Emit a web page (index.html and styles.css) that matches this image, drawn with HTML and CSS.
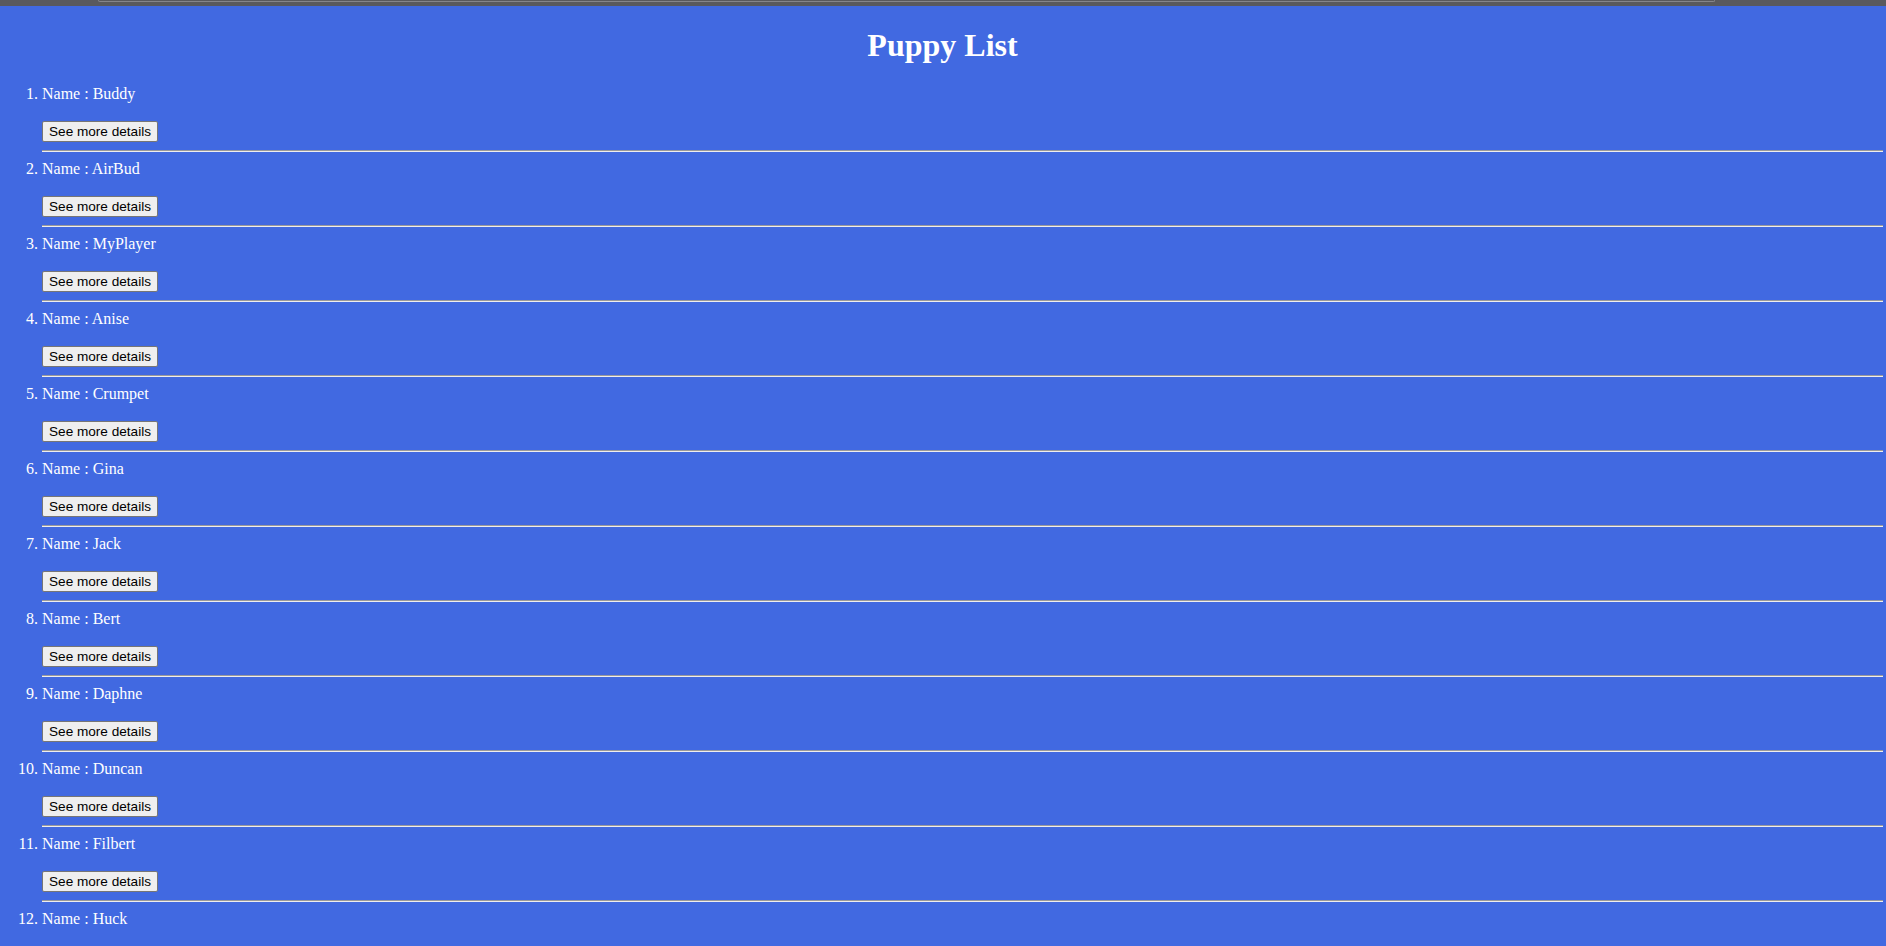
FILE: index.html
```html
<!DOCTYPE html>
<html lang="en">
<head>
<meta charset="utf-8">
<title>Puppy List</title>
<link rel="stylesheet" href="styles.css">
</head>
<body>
<div class="chrome"><div class="chrome-bar"></div></div>
<main class="page">
  <h1 class="title">Puppy List</h1>
  <ol class="puppies">
    <li class="puppy"><span class="name">Name : Buddy</span><div class="actions"><button class="details">See more details</button></div><hr class="divider"></li>
    <li class="puppy"><span class="name">Name : AirBud</span><div class="actions"><button class="details">See more details</button></div><hr class="divider"></li>
    <li class="puppy"><span class="name">Name : MyPlayer</span><div class="actions"><button class="details">See more details</button></div><hr class="divider"></li>
    <li class="puppy"><span class="name">Name : Anise</span><div class="actions"><button class="details">See more details</button></div><hr class="divider"></li>
    <li class="puppy"><span class="name">Name : Crumpet</span><div class="actions"><button class="details">See more details</button></div><hr class="divider"></li>
    <li class="puppy"><span class="name">Name : Gina</span><div class="actions"><button class="details">See more details</button></div><hr class="divider"></li>
    <li class="puppy"><span class="name">Name : Jack</span><div class="actions"><button class="details">See more details</button></div><hr class="divider"></li>
    <li class="puppy"><span class="name">Name : Bert</span><div class="actions"><button class="details">See more details</button></div><hr class="divider"></li>
    <li class="puppy"><span class="name">Name : Daphne</span><div class="actions"><button class="details">See more details</button></div><hr class="divider"></li>
    <li class="puppy"><span class="name">Name : Duncan</span><div class="actions"><button class="details">See more details</button></div><hr class="divider"></li>
    <li class="puppy"><span class="name">Name : Filbert</span><div class="actions"><button class="details">See more details</button></div><hr class="divider"></li>
    <li class="puppy"><span class="name">Name : Huck</span><div class="actions"><button class="details">See more details</button></div><hr class="divider"></li>
  </ol>
</main>
</body>
</html>
```
FILE: styles.css
```css
html, body {
  margin: 0;
  padding: 0;
}

body {
  background: #4169e1;
  color: #ffffff;
  font-family: "Liberation Serif", "Times New Roman", serif;
  font-size: 16px;
}

.chrome {
  height: 6px;
  background: #59595d;
  display: flex;
  padding: 0 171px 0 98px;
  box-sizing: border-box;
}

.chrome-bar {
  flex: 1;
  height: 1px;
  border: 1px solid #85858a;
  border-top: none;
  border-radius: 0 0 8px 8px;
}

.page {
  padding: 0 3px 0 2px;
}

.title {
  font-size: 32px;
  font-weight: bold;
  text-align: center;
  margin: 21.44px 0 21px;
}

.puppies {
  margin: 0;
  padding-left: 40px;
}

.puppy {
  color: #ffffff;
}

.name {
  display: block;
  height: 18px;
  line-height: 18px;
}

.actions {
  margin-top: 18px;
  height: 21px;
  display: flex;
  align-items: flex-start;
}

.details {
  font: 13.6px "Liberation Sans", Arial, sans-serif;
  color: #000000;
  background: #efefef;
  border: 1px solid #767676;
  border-radius: 2px;
  padding: 1px 6px;
  height: 21px;
  box-sizing: border-box;
  line-height: 15px;
  margin: 0;
}

.divider {
  margin: 8px 0;
  height: 0;
  border: 0;
  border-top: 1px solid #9a9a9a;
  border-bottom: 1px solid #eeeeee;
}
```
